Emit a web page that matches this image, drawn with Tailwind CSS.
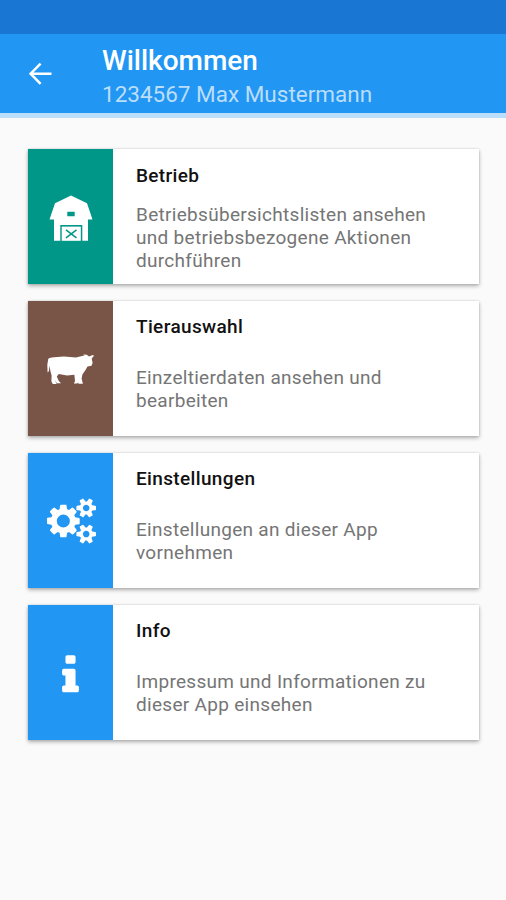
<!DOCTYPE html>
<html lang="de">
<head>
    <meta charset="UTF-8">
    <meta name="viewport" content="width=device-width, initial-scale=1.0">
    <title>Willkommen</title>
    <script src="https://cdn.jsdelivr.net/npm/@tailwindcss/browser@4"></script>
</head>
<body class="min-h-screen bg-[#fafafa] font-[Roboto,sans-serif]">
    <div class="h-[34px] bg-[#1976d2]"></div>
    <header class="flex h-[84px] items-start border-b-[5px] border-[#bbdefb] bg-[#2196f3]">
        <button class="mt-[28px] ml-[28px]" aria-label="Zurück">
            <svg class="h-6 w-6" viewBox="0 0 24 24" fill="none" stroke="#fff" stroke-width="2.5">
                <path d="M23.5 11.7H3M12.6 1.6L2.6 11.7l10 10.1"/>
            </svg>
        </button>
        <div class="ml-[50px] pt-[10px] whitespace-nowrap">
            <h1 class="text-[28px] leading-[34px] font-medium text-white">Willkommen</h1>
            <p class="text-[22.5px] leading-8 text-[#bbdefb]">1234567 Max Mustermann</p>
        </div>
    </header>

    <main class="flex flex-col gap-[17px] pt-[31px] pr-[27px] pl-7">
        <!-- Betrieb -->
        <a class="flex h-[135px] bg-white shadow-[0_2px_4px_rgba(0,0,0,0.3),0_0_2px_rgba(0,0,0,0.15)]">
            <div class="flex w-[85px] items-center justify-center bg-[#009688]">
                <svg class="mt-[2px] ml-[2px] h-16 w-16" viewBox="0 0 64 64" fill="#fff">
                    <path fill-rule="evenodd" d="M31 9.5L47 17.2 52.5 33.5H48V54.8H42.3V39H20.3V54.8H14V33.5H9.5L15 17.2zM27.3 25.7V30.3H34.7V25.7z"/>
                    <path d="M21.7 40.6H40.8V54.8H21.7z"/>
                    <path d="M26 43.8L36.5 51.8M36.5 43.8L26 51.8" stroke="#009688" stroke-width="1.5" fill="none"/>
                </svg>
            </div>
            <div class="flex-1 pt-[15px] pl-[23px] whitespace-nowrap">
                <h2 class="text-[19px] leading-6 font-medium tracking-[0.35px] text-[#111]">Betrieb</h2>
                <p class="mt-[15px] text-[19px] leading-[23px] tracking-[0.3px] text-[#757575]">Betriebsübersichtslisten ansehen<br>und betriebsbezogene Aktionen<br>durchführen</p>
            </div>
        </a>

        <!-- Tierauswahl -->
        <a class="flex h-[135px] bg-white shadow-[0_2px_4px_rgba(0,0,0,0.3),0_0_2px_rgba(0,0,0,0.15)]">
            <div class="flex w-[85px] items-center justify-center bg-[#795548]">
                <svg class="ml-[3px] h-14 w-16" viewBox="0 0 64 56" fill="#fff">
                    <path d="M8.2 18Q9.6 16.2 14 16.2L24 15.4 36 16.4 41 15.2 44.5 14.6 43 13.4 46.8 13.8 49 15.4 52.8 14.1 54 14.8 51.7 17.4 52.6 22 51.5 24.8 47.5 25.6 45.5 29 42.4 33.5 41.6 37.5 42.9 42.8H38.6L38 41.4 37.2 42.4H33.8L35 40.3 34.4 33.8 27 34.4 18.8 33 16.8 35.5 18.8 40 21 42.3H17L14.8 39.2 16.7 43H12.8L11.4 40.5 11.6 34.5 10.4 30 9.3 24.5 9 30 7.6 31.4 7.3 24z"/>
                </svg>
            </div>
            <div class="flex-1 pt-[14px] pl-[23px] whitespace-nowrap">
                <h2 class="text-[19px] leading-6 font-medium tracking-[0.35px] text-[#111]">Tierauswahl</h2>
                <p class="mt-[27px] text-[19px] leading-[23px] tracking-[0.3px] text-[#757575]">Einzeltierdaten ansehen und<br>bearbeiten</p>
            </div>
        </a>

        <!-- Einstellungen -->
        <a class="flex h-[135px] bg-white shadow-[0_2px_4px_rgba(0,0,0,0.3),0_0_2px_rgba(0,0,0,0.15)]">
            <div class="flex w-[85px] items-center justify-center bg-[#2196f3]">
                <svg class="mt-px ml-px h-[46px] w-[49px]" viewBox="0 0 1920 1792" fill="#fff">
                    <path d="M896 896q0-106-75-181t-181-75-181 75-75 181 75 181 181 75 181-75 75-181zm768 512q0-52-38-90t-90-38-90 38-38 90q0 53 37.5 90.5t90.5 37.5 90.5-37.5 37.5-90.5zm0-1024q0-52-38-90t-90-38-90 38-38 90q0 53 37.5 90.5t90.5 37.5 90.5-37.5 37.5-90.5zm-384 421v185q0 10-7 19.5t-16 10.5l-155 24q-11 35-32 76 34 48 90 115 7 11 7 20 0 12-7 19-23 30-82.5 89.5t-78.5 59.5q-11 0-21-7l-115-90q-37 19-77 31-11 108-23 155-7 24-30 24h-186q-11 0-20-7.5t-10-17.5l-23-153q-34-10-75-31l-118 89q-7 7-20 7-11 0-21-8-144-133-144-160 0-9 7-19 10-14 41-53t47-61q-23-44-35-82l-152-24q-10-1-17-9.5t-7-19.5v-185q0-10 7-19.5t16-10.5l155-24q11-35 32-76-34-48-90-115-7-11-7-20 0-12 7-20 22-30 82-89t79-59q11 0 21 7l115 90q34-18 77-32 11-108 23-154 7-24 30-24h186q11 0 20 7.5t10 17.5l23 153q34 10 75 31l118-89q8-7 20-7 11 0 21 8 144 133 144 160 0 8-7 19-12 16-42 54t-45 60q23 48 34 82l152 23q10 2 17 10.5t7 19.5zm640 533v140q0 16-149 31-12 27-30 52 51 113 51 138 0 4-4 7-122 71-124 71-8 0-46-47t-52-68q-20 2-30 2t-30-2q-14 21-52 68t-46 47q-2 0-124-71-4-3-4-7 0-25 51-138-18-25-30-52-149-15-149-31v-140q0-16 149-31 13-29 30-52-51-113-51-138 0-4 4-7 4-2 35-20t59-34 30-16q8 0 46 46.5t52 67.5q20-2 30-2t30 2q51-71 92-112l6-2q4 0 124 70 4 3 4 7 0 25-51 138 17 23 30 52 149 15 149 31zm0-1024v140q0 16-149 31-12 27-30 52 51 113 51 138 0 4-4 7-122 71-124 71-8 0-46-47t-52-68q-20 2-30 2t-30-2q-14 21-52 68t-46 47q-2 0-124-71-4-3-4-7 0-25 51-138-18-25-30-52-149-15-149-31v-140q0-16 149-31 13-29 30-52-51-113-51-138 0-4 4-7 4-2 35-20t59-34 30-16q8 0 46 46.5t52 67.5q20-2 30-2t30 2q51-71 92-112l6-2q4 0 124 70 4 3 4 7 0 25-51 138 17 23 30 52 149 15 149 31z"/>
                </svg>
            </div>
            <div class="flex-1 pt-[14px] pl-[23px] whitespace-nowrap">
                <h2 class="text-[19px] leading-6 font-medium tracking-[0.35px] text-[#111]">Einstellungen</h2>
                <p class="mt-[27px] text-[19px] leading-[23px] tracking-[0.3px] text-[#757575]">Einstellungen an dieser App<br>vornehmen</p>
            </div>
        </a>

        <!-- Info -->
        <a class="flex h-[135px] bg-white shadow-[0_2px_4px_rgba(0,0,0,0.3),0_0_2px_rgba(0,0,0,0.15)]">
            <div class="flex w-[85px] items-center justify-center bg-[#2196f3]">
                <svg class="mt-[6px] h-[47px] w-[47px]" viewBox="0 0 1792 1792" fill="#fff">
                    <path d="M1216 1344v128q0 26-19 45t-45 19h-512q-26 0-45-19t-19-45v-128q0-26 19-45t45-19h64v-384h-64q-26 0-45-19t-19-45v-128q0-26 19-45t45-19h384q26 0 45 19t19 45v576h64q26 0 45 19t19 45zm-128-1152v192q0 26-19 45t-45 19h-256q-26 0-45-19t-19-45v-192q0-26 19-45t45-19h256q26 0 45 19t19 45z"/>
                </svg>
            </div>
            <div class="flex-1 pt-[14px] pl-[23px] whitespace-nowrap">
                <h2 class="text-[19px] leading-6 font-medium tracking-[0.35px] text-[#111]">Info</h2>
                <p class="mt-[27px] text-[19px] leading-[23px] tracking-[0.3px] text-[#757575]">Impressum und Informationen zu<br>dieser App einsehen</p>
            </div>
        </a>
    </main>
</body>
</html>
